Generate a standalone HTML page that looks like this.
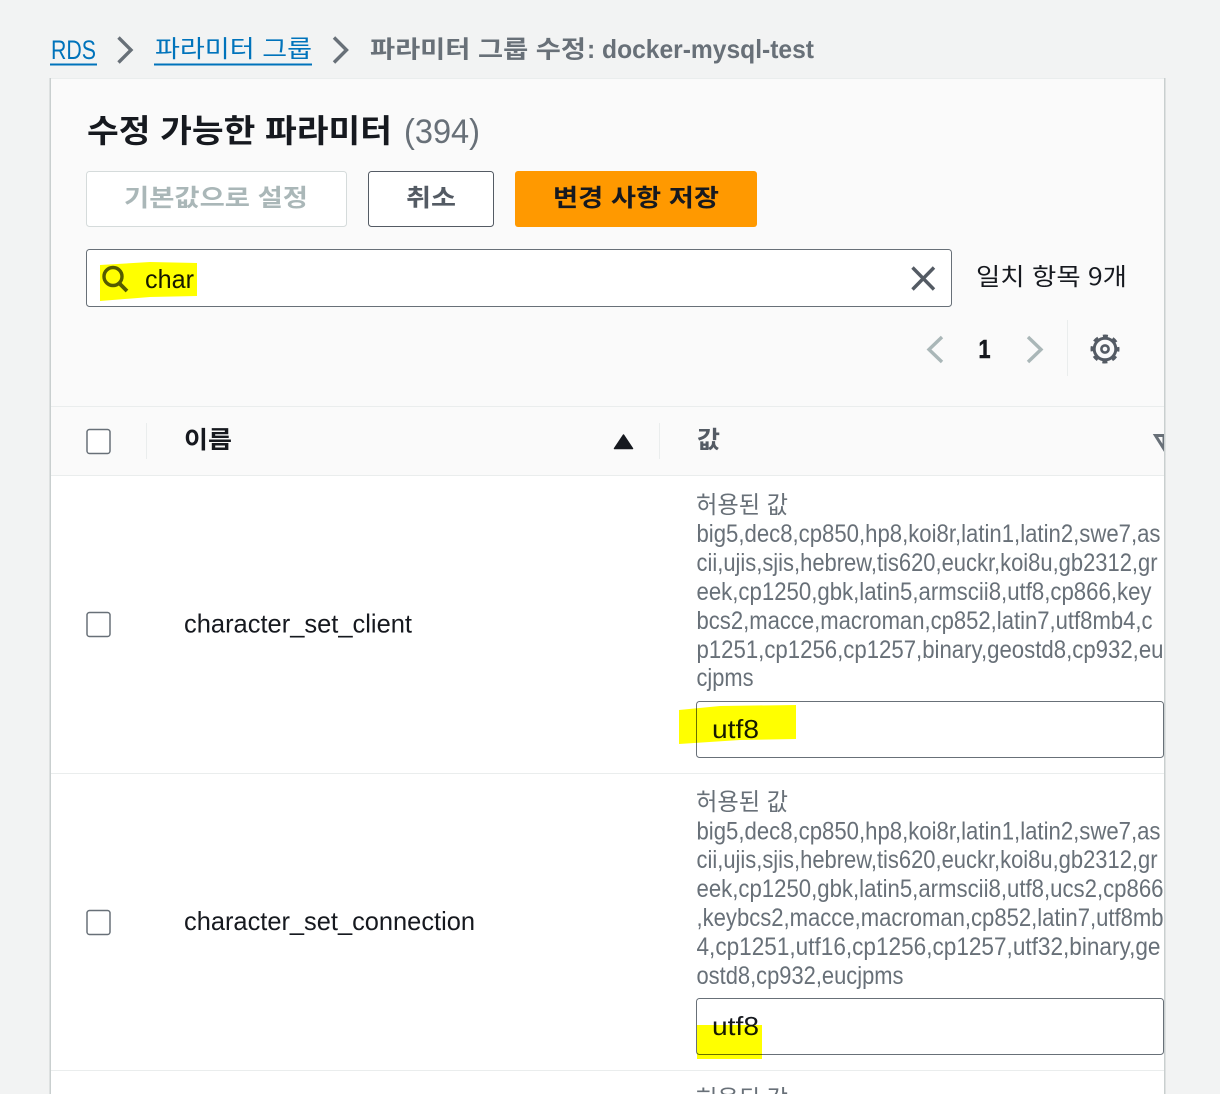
<!DOCTYPE html>
<html lang="ko"><head><meta charset="utf-8"><title>파라미터 그룹 수정</title>
<style>
html,body{margin:0;padding:0;background:#f2f3f3;width:1220px;height:1094px;overflow:hidden}
svg{display:block}
text{font-family:"Liberation Sans","Noto Sans CJK KR",sans-serif;font-size:25px;fill:#16191f}
.k{font-family:"Noto Sans CJK KR","Liberation Sans",sans-serif;font-size:24px}
.g{fill:#687078}
.b{font-weight:700}
.cb{fill:#fff;stroke:#687078;stroke-width:1.500}
.y{fill:#ffff00;mix-blend-mode:multiply}
.n{font-size:26px}
</style></head><body>
<svg width="1220" height="1094" viewBox="0 0 1220 1094" xmlns="http://www.w3.org/2000/svg">
<rect width="1220" height="1094" fill="#f2f3f3"/>
<!-- breadcrumb -->
<text x="51" y="59" textLength="45" lengthAdjust="spacingAndGlyphs" style="fill:#0073bb;font-size:27px">RDS</text>
<rect x="50" y="63.500" width="47" height="2" fill="#0073bb"/>
<path d="M118.500 37.500 131 50 118.500 62.500" fill="none" stroke="#687078" stroke-width="3.400"/>
<text class="k" x="155" y="57" textLength="157" lengthAdjust="spacingAndGlyphs" style="fill:#0073bb">파라미터 그룹</text>
<rect x="154" y="63.500" width="158" height="2" fill="#0073bb"/>
<path d="M334 37.500 346.500 50 334 62.500" fill="none" stroke="#687078" stroke-width="3.400"/>
<text class="k b g" x="370" y="57.500" textLength="216" lengthAdjust="spacingAndGlyphs">파라미터 그룹 수정</text>
<text class="b g" x="587" y="58" style="font-size:26px" textLength="227" lengthAdjust="spacingAndGlyphs">: docker-mysql-test</text>
<!-- card -->
<rect x="50" y="78" width="1115" height="1020" fill="#fff"/>
<rect x="51" y="78" width="1113" height="398" fill="#fafafa"/>
<rect x="50" y="78" width="1115" height="1" fill="#eaeded"/>
<rect x="49.500" y="78" width="1.500" height="1020" fill="#c9cfcf"/>
<rect x="1164" y="78" width="1.500" height="1020" fill="#c9cfcf"/>
<text class="k b" x="87" y="142" style="font-size:32px" textLength="305" lengthAdjust="spacingAndGlyphs">수정 가능한 파라미터</text>
<text class="g" x="404" y="143" style="font-size:34px" textLength="76" lengthAdjust="spacingAndGlyphs">(394)</text>
<!-- buttons -->
<rect x="86.500" y="171.500" width="260" height="55" rx="3" fill="#fff" stroke="#d5dbdb"/>
<text class="k b" x="124" y="206" textLength="184" lengthAdjust="spacingAndGlyphs" style="fill:#aab7b8">기본값으로 설정</text>
<rect x="368.500" y="171.500" width="125" height="55" rx="3" fill="#fff" stroke="#545b64"/>
<text class="k b" x="406" y="206" textLength="50" lengthAdjust="spacingAndGlyphs" style="fill:#545b64">취소</text>
<rect x="515" y="171" width="242" height="56" rx="3" fill="#ff9900"/>
<text class="k b" x="553" y="206" textLength="166" lengthAdjust="spacingAndGlyphs">변경 사항 저장</text>
<!-- search -->
<rect x="86.500" y="249.500" width="865" height="57" rx="3" fill="#fff" stroke="#687078"/>
<g fill="none" stroke="#545b64" stroke-width="3.400">
<circle cx="113" cy="276.500" r="9"/>
<path d="M119.500 283.500 127 291" stroke-width="3.800"/>
<path d="M912.500 267.500 934 289.500M934 267.500 912.500 289.500"/>
</g>
<text class="n" x="145" y="288" textLength="49" lengthAdjust="spacingAndGlyphs">char</text>
<path class="y" d="M100 265 L150 262 L197 263 V296 L150 297 L100 301Z"/>
<text class="k" x="976" y="285" textLength="151" lengthAdjust="spacingAndGlyphs">일치 항목 9개</text>
<!-- pagination -->
<path d="M942 337 929 349.500 942 362" fill="none" stroke="#aab7b8" stroke-width="3.400"/>
<text class="b" x="978.500" y="358" style="font-size:26px;stroke:#16191f;stroke-width:.6" textLength="12" lengthAdjust="spacingAndGlyphs">1</text>
<path d="M1028 337 1041 349.500 1028 362" fill="none" stroke="#aab7b8" stroke-width="3.400"/>
<rect x="1067" y="320" width="1" height="56" fill="#eaeded"/>
<g fill="none" stroke="#545b64">
<circle cx="1105" cy="349" r="10.800" stroke-width="3"/>
<circle cx="1105" cy="349" r="3.600" stroke-width="2.600"/>
<circle cx="1105" cy="349" r="13" stroke-width="3" stroke-dasharray="5.100 5.110" stroke-dashoffset="2.550"/>
</g>
<!-- table head -->
<rect x="51" y="406" width="1113" height="1" fill="#eaeded"/>
<rect x="51" y="475" width="1113" height="1" fill="#eaeded"/>
<rect class="cb" x="87" y="429.500" width="23" height="24" rx="2.500"/>
<rect x="146" y="423" width="1" height="36" fill="#eaeded"/>
<text class="k b" x="184" y="448" textLength="48" lengthAdjust="spacingAndGlyphs">이름</text>
<path d="M623.500 435 632.500 448.500H614.500Z" fill="#16191f" stroke="#16191f" stroke-width="1.500" stroke-linejoin="round"/>
<rect x="659" y="423" width="1" height="36" fill="#eaeded"/>
<text class="k b" x="697" y="448" textLength="23" lengthAdjust="spacingAndGlyphs" style="fill:#545b64">값</text>
<path d="M1155.500 435.500H1164V449Z" fill="#fafafa" stroke="#687078" stroke-width="3"/>
<rect x="1164" y="430" width="1.500" height="24" fill="#c9cfcf"/>
<!-- row 1 -->
<rect class="cb" x="87" y="612.500" width="23" height="24" rx="2.500"/>
<text class="n" x="184" y="632.500" textLength="228" lengthAdjust="spacingAndGlyphs">character_set_client</text>
<text class="k g" x="696" y="513" textLength="92" lengthAdjust="spacingAndGlyphs">허용된 값</text>
<text class="g" x="696.500" y="542" textLength="464" lengthAdjust="spacingAndGlyphs">big5,dec8,cp850,hp8,koi8r,latin1,latin2,swe7,as</text>
<text class="g" x="696.500" y="571" textLength="461" lengthAdjust="spacingAndGlyphs">cii,ujis,sjis,hebrew,tis620,euckr,koi8u,gb2312,gr</text>
<text class="g" x="696.500" y="600" textLength="455" lengthAdjust="spacingAndGlyphs">eek,cp1250,gbk,latin5,armscii8,utf8,cp866,key</text>
<text class="g" x="696.500" y="629" textLength="456" lengthAdjust="spacingAndGlyphs">bcs2,macce,macroman,cp852,latin7,utf8mb4,c</text>
<text class="g" x="696.500" y="658" textLength="467" lengthAdjust="spacingAndGlyphs">p1251,cp1256,cp1257,binary,geostd8,cp932,eu</text>
<text class="g" x="696.500" y="686" textLength="57" lengthAdjust="spacingAndGlyphs">cjpms</text>
<rect x="696.500" y="701.500" width="467" height="56" rx="3" fill="#fff" stroke="#687078"/>
<text class="n" x="712" y="738" textLength="47" lengthAdjust="spacingAndGlyphs">utf8</text>
<path class="y" d="M679 710 L720 706 L796 705 V739 L740 740 L679 744Z"/>
<rect x="51" y="773" width="1113" height="1" fill="#eaeded"/>
<!-- row 2 -->
<rect class="cb" x="87" y="910.500" width="23" height="24" rx="2.500"/>
<text class="n" x="184" y="930" textLength="291" lengthAdjust="spacingAndGlyphs">character_set_connection</text>
<text class="k g" x="696" y="810" textLength="92" lengthAdjust="spacingAndGlyphs">허용된 값</text>
<text class="g" x="696.500" y="839.500" textLength="464" lengthAdjust="spacingAndGlyphs">big5,dec8,cp850,hp8,koi8r,latin1,latin2,swe7,as</text>
<text class="g" x="696.500" y="868" textLength="461" lengthAdjust="spacingAndGlyphs">cii,ujis,sjis,hebrew,tis620,euckr,koi8u,gb2312,gr</text>
<text class="g" x="696.500" y="897" textLength="467" lengthAdjust="spacingAndGlyphs">eek,cp1250,gbk,latin5,armscii8,utf8,ucs2,cp866</text>
<text class="g" x="696.500" y="926" textLength="467" lengthAdjust="spacingAndGlyphs">,keybcs2,macce,macroman,cp852,latin7,utf8mb</text>
<text class="g" x="696.500" y="955" textLength="464" lengthAdjust="spacingAndGlyphs">4,cp1251,utf16,cp1256,cp1257,utf32,binary,ge</text>
<text class="g" x="696.500" y="984" textLength="207" lengthAdjust="spacingAndGlyphs">ostd8,cp932,eucjpms</text>
<rect x="696.500" y="998.500" width="467" height="56" rx="3" fill="#fff" stroke="#687078"/>
<text class="n" x="712" y="1035" textLength="47" lengthAdjust="spacingAndGlyphs">utf8</text>
<rect class="y" x="697" y="1025" width="65" height="34"/>
<rect x="51" y="1070" width="1113" height="1" fill="#eaeded"/>
<!-- row 3 -->
<text class="k g" x="696" y="1107" textLength="92" lengthAdjust="spacingAndGlyphs">허용된 값</text>
</svg>
</body></html>
